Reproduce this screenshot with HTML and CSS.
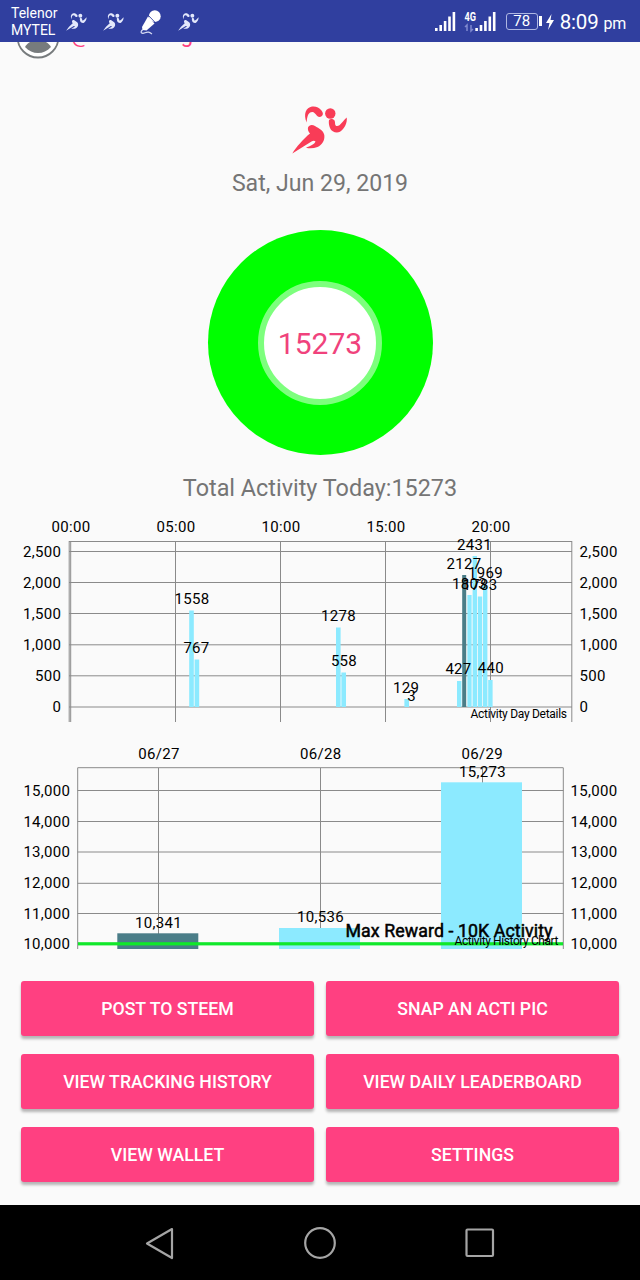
FILE: index.html
```
<!DOCTYPE html>
<html lang="en">
<head>
    <meta charset="UTF-8">
    <meta name="viewport" content="width=device-width, initial-scale=1.0">
    <title>Activity</title>
    <link rel="stylesheet" href="styles.css">
</head>
<body>
    <svg class="defs" width="0" height="0">
        <symbol id="runner" viewBox="0 0 56 48">
            <path d="M14.700 16.500C11 8 14 1.500 20 0.500C24 0 27 1.500 29.500 4.500C32 7.500 31 10.800 27.500 10.900C24.500 10.800 23.500 6.500 20.500 6C16.500 5.800 15 10 14.700 16.500Z"/>
            <circle cx="38.300" cy="7.500" r="5.200"/>
            <path d="M37 14C38.500 12.500 41.500 13 42.500 14.500C43.500 16.500 42.500 19 44.300 20C48 21 51 14.500 54.700 11.500C55.500 16.500 52.500 23 48 25.800C44.500 27.500 39.500 26 38 22C37 19.500 36.500 16.500 37 14Z"/>
            <path d="M16 21.500C17 18.500 20.500 18.200 23 20C27 22.500 31.500 24.500 32.300 29C33 34.500 30 39 25.500 41C21.500 42.500 17.500 42.500 14 41.700C18 40 22.500 38.500 23.500 35.500C22.500 34.500 21 34.500 19.500 35.500L0.300 47.500C4 41.500 11.500 32.500 18 27.500C16.200 25.500 15.600 23.500 16 21.500Z"/>
        </symbol>
    </svg>

    <div class="status-bar">
        <div class="carrier">Telenor<br>MYTEL</div>
        <div class="notifications">
            <svg class="runner-small" width="21" height="18"><use href="#runner"/></svg>
            <svg class="runner-small" width="21" height="18"><use href="#runner"/></svg>
            <svg class="mic" width="23" height="26" viewBox="0 0 23 26">
                <circle cx="14.800" cy="7.200" r="5.900" fill="#fff"/>
                <path d="M8 7.500L14.500 14.500L6.500 21.500L2.500 21L2 18Z" fill="#fff"/>
                <path d="M8.500 6.500L15.500 13.800" stroke="#303f9f" stroke-width="0.900"/>
                <path d="M3 20.500C-1 23.500 2 25 5 23.800S9 23 12 25" fill="none" stroke="#d7dcf4" stroke-width="1.200"/>
            </svg>
            <svg class="runner-small" width="21" height="18"><use href="#runner"/></svg>
        </div>
        <div class="system">
            <svg width="62" height="24" viewBox="0 0 62 24" fill="#fff">
                <rect x="0" y="18" width="2.6" height="3"/>
                <rect x="4.4" y="15" width="2.6" height="6"/>
                <rect x="8.8" y="11" width="2.6" height="10"/>
                <rect x="13.2" y="6.500" width="2.600" height="14.500"/>
                <rect x="17.6" y="2" width="2.6" height="19"/>
                <text x="29.500" y="11" class="network" textLength="11.500" lengthAdjust="spacingAndGlyphs">4G</text>
                <path d="M32 21V15L30 17M36 15V21L38 19" fill="none" stroke="#7f89cf" stroke-width="1.5"/>
                <rect x="40.3" y="18" width="2.6" height="3"/>
                <rect x="44.7" y="15" width="2.6" height="6"/>
                <rect x="49.1" y="11" width="2.6" height="10"/>
                <rect x="53.5" y="6.500" width="2.600" height="14.500"/>
                <rect x="57.900" y="2" width="2.6" height="19"/>
            </svg>
            <div class="battery">78</div>
            <svg class="bolt" width="8" height="16" viewBox="0 0 8 16"><path d="M5.500 0L0 9H3.500L2 16L8 6H4.500Z" fill="#fff"/></svg>
            <div class="clock">8:09 <span>pm</span></div>
        </div>
    </div>

    <!-- scrolled under the status bar -->
    <div class="profile">
        <svg width="44" height="44" viewBox="0 0 44 44">
            <circle cx="22" cy="22" r="20.500" fill="#fff" stroke="#777b7d" stroke-width="1.8"/>
            <path d="M9 32C12 27 17 25 22 25S32 27 35 32C31 36 27 38 22 38S13 36 9 32Z" fill="#777b7d"/>
        </svg>
        <div class="username"><span>@</span><span>g</span></div>
    </div>

    <div class="summary">
        <svg class="logo" width="56" height="48"><use href="#runner"/></svg>
        <div class="date">Sat, Jun 29, 2019</div>
        <div class="ring"><div class="ring-center">15273</div></div>
        <div class="total">Total Activity Today:15273</div>
    </div>

    <svg class="chart" width="640" height="216" viewBox="0 512 640 216">
        <g class="grid">
            <path d="M69 541.500H572M69 551.500H572M69 582.500H572M69 613.500H572M69 644.800H572M69 675.800H572M69 707H572"/>
            <path d="M69.200 541V722M70.700 541V722M175.500 541V722M280.500 541V722M385.500 541V722M490.500 541V722M571.800 541V722"/>
        </g>
        <g class="bars">
            <rect x="189.200" y="610.500" width="4.600" height="96.500"/>
            <rect x="194.600" y="659.500" width="4.600" height="47.500"/>
            <rect x="336" y="627.500" width="4.600" height="79.500"/>
            <rect x="341.400" y="672.500" width="4.600" height="34.500"/>
            <rect x="404.400" y="699" width="4.600" height="8"/>
            <rect x="457" y="681" width="4.400" height="26"/>
            <rect class="selected" x="462.200" y="575" width="4" height="132"/>
            <rect x="467.400" y="595" width="4.200" height="112"/>
            <rect x="472.600" y="556" width="4.400" height="151"/>
            <rect x="477.800" y="596.500" width="4.400" height="110.500"/>
            <rect x="483" y="585" width="4.400" height="122"/>
            <rect x="488.200" y="680" width="4.400" height="27"/>
        </g>
        <g class="labels middle">
            <text x="71" y="532">00:00</text>
            <text x="176" y="532">05:00</text>
            <text x="281" y="532">10:00</text>
            <text x="386" y="532">15:00</text>
            <text x="491" y="532">20:00</text>
            <text x="192" y="604">1558</text>
            <text x="196.500" y="653">767</text>
            <text x="338.500" y="621">1278</text>
            <text x="344" y="666">558</text>
            <text x="406.200" y="693">129</text>
            <text x="411.500" y="700.500">3</text>
            <text x="458.500" y="674">427</text>
            <text x="464" y="568.500">2127</text>
            <text x="469.500" y="588.500">1803</text>
            <text x="474.500" y="549.500">2431</text>
            <text x="480" y="589.500">1783</text>
            <text x="485.500" y="578">1969</text>
            <text x="490.800" y="673">440</text>
        </g>
        <g class="labels end">
            <text x="61.300" y="557">2,500</text>
            <text x="61.300" y="588">2,000</text>
            <text x="61.300" y="619">1,500</text>
            <text x="61.300" y="650">1,000</text>
            <text x="61.300" y="681">500</text>
            <text x="61.300" y="712">0</text>
        </g>
        <g class="labels">
            <text x="579.500" y="557">2,500</text>
            <text x="579.500" y="588">2,000</text>
            <text x="579.500" y="619">1,500</text>
            <text x="579.500" y="650">1,000</text>
            <text x="579.500" y="681">500</text>
            <text x="579.500" y="712">0</text>
        </g>
        <text class="description" x="470.500" y="718" textLength="96.500">Activity Day Details</text>
    </svg>

    <svg class="chart history" width="640" height="220" viewBox="0 740 640 220">
        <g class="grid">
            <path d="M77.500 767.700H563.500M77.500 790.500H563.500M77.500 821.500H563.500M77.500 852H563.500M77.500 883.300H563.500M77.500 913.500H563.500"/>
            <path d="M77.700 768V949M158.500 768V949M320.500 768V949M482.500 768V949M563.300 768V949"/>
        </g>
        <g class="bars">
            <rect class="selected" x="117.300" y="933.300" width="81" height="15.700"/>
            <rect x="279" y="928" width="81" height="21"/>
            <rect x="441" y="782.300" width="81" height="166.700"/>
        </g>
        <rect class="limit" x="78" y="942.200" width="485" height="3.200"/>
        <g class="labels middle">
            <text x="159" y="759">06/27</text>
            <text x="320.700" y="759">06/28</text>
            <text x="482.300" y="759">06/29</text>
            <text x="158.500" y="927.500">10,341</text>
            <text x="320.500" y="921.500">10,536</text>
            <text x="482.500" y="776.500">15,273</text>
        </g>
        <g class="labels end">
            <text x="70.300" y="796">15,000</text>
            <text x="70.300" y="827">14,000</text>
            <text x="70.300" y="857">13,000</text>
            <text x="70.300" y="888">12,000</text>
            <text x="70.300" y="918.500">11,000</text>
            <text x="70.300" y="949">10,000</text>
        </g>
        <g class="labels">
            <text x="570.500" y="796">15,000</text>
            <text x="570.500" y="827">14,000</text>
            <text x="570.500" y="857">13,000</text>
            <text x="570.500" y="888">12,000</text>
            <text x="570.500" y="918.500">11,000</text>
            <text x="570.500" y="949">10,000</text>
        </g>
        <text class="limit-label" x="345.500" y="937" textLength="207">Max Reward - 10K Activity</text>
        <text class="description" x="454.500" y="945" textLength="104">Activity History Chart</text>
    </svg>

    <div class="buttons">
        <button>POST TO STEEM</button>
        <button>SNAP AN ACTI PIC</button>
        <button>VIEW TRACKING HISTORY</button>
        <button>VIEW DAILY LEADERBOARD</button>
        <button>VIEW WALLET</button>
        <button>SETTINGS</button>
    </div>

    <div class="nav-bar">
        <svg width="32" height="34" viewBox="0 0 32 34"><path d="M28 3L3 17.500L28 32Z"/></svg>
        <svg width="34" height="34" viewBox="0 0 34 34"><circle cx="17" cy="17" r="14.800"/></svg>
        <svg width="32" height="34" viewBox="0 0 32 34"><rect x="2.500" y="3.500" width="26.500" height="26.500" rx="1"/></svg>
    </div>
</body>
</html>
```
FILE: styles.css
```
body {
    margin: 0;
    width: 640px;
    height: 1280px;
    overflow: hidden;
    display: flex;
    flex-direction: column;
    background-color: #fafafa;
    font-family: Roboto, sans-serif;
}

svg {
    display: block;
    flex-shrink: 0;
}

.defs {
    position: absolute;
}

.status-bar {
    position: relative;
    z-index: 1;
    height: 42px;
    flex-shrink: 0;
    box-sizing: border-box;
    padding: 1px 14px 0 11px;
    display: flex;
    align-items: center;
    background-color: #303f9f;
    color: #fff;
}

.carrier {
    width: 55px;
    font-size: 14px;
    line-height: 17px;
    white-space: nowrap;
}

.notifications {
    display: flex;
    align-items: center;
    gap: 16px;
}

.runner-small {
    fill: #e3e8fb;
}

.mic {
    margin: 0 -1px 0 0;
}

.system {
    margin-left: auto;
    display: flex;
    align-items: center;
}

.network {
    font-size: 12px;
    font-weight: bold;
}

.battery {
    position: relative;
    width: 32px;
    height: 17px;
    margin-left: 9px;
    box-sizing: border-box;
    border: 1.5px solid #aeb6e2;
    border-radius: 3px;
    font-size: 15px;
    line-height: 15px;
    text-align: center;
}

.battery::after {
    content: "";
    position: absolute;
    top: 2px;
    right: -5px;
    width: 3px;
    height: 10px;
    background-color: #fff;
}

.bolt {
    margin-left: 8px;
}

.clock {
    margin-left: 6px;
    font-size: 20.5px;
    letter-spacing: -0.2px;
    white-space: nowrap;
}

.clock span {
    font-size: 16px;
}

/* profile row */
.profile {
    height: 44px;
    flex-shrink: 0;
    margin-top: -27px;
    padding-left: 16px;
    display: flex;
}

.username {
    width: 122px;
    margin-left: 11px;
    display: flex;
    justify-content: space-between;
    color: #ff4081;
    font-size: 22px;
    line-height: 39px;
}

.summary {
    display: flex;
    flex-direction: column;
    align-items: center;
    color: #757575;
}

.logo {
    margin-top: 47px;
    fill: #f93c57;
}

.date {
    margin-top: 16px;
    font-size: 23.1px;
    line-height: 28px;
}

.ring {
    width: 225px;
    height: 225px;
    margin-top: 32px;
    border-radius: 50%;
    background-color: #00ff00;
    display: flex;
    align-items: center;
    justify-content: center;
}

.ring-center {
    width: 112px;
    height: 112px;
    border: 6px solid #7dff7d;
    border-radius: 50%;
    background-color: #fff;
    color: #f0427c;
    font-size: 30px;
    line-height: 113px;
    text-align: center;
}

.total {
    margin-top: 19px;
    font-size: 23.4px;
    line-height: 28px;
}

/* charts */
.chart {
    margin-top: 10px;
    font-size: 15px;
}

.history {
    margin-top: 12px;
}

.grid path {
    fill: none;
    stroke: #8a8a8a;
    stroke-width: 1;
}

.bars rect {
    fill: #8ceaff;
}

.bars .selected {
    fill: #4a7d88;
}

.labels {
    fill: #000;
    letter-spacing: 0.3px;
}

.middle {
    text-anchor: middle;
}

.end {
    text-anchor: end;
}

.description {
    font-size: 12px;
}

.limit {
    fill: #10e82a;
}

.limit-label {
    font-size: 17.8px;
    stroke: #000;
    stroke-width: 0.5px;
}

/* actions */
.buttons {
    display: grid;
    grid-template-columns: 1fr 1fr;
    gap: 18px 12px;
    padding: 20.5px 21px 0;
}

.buttons button {
    height: 55px;
    padding-top: 3px;
    border: none;
    border-radius: 3px;
    background-color: #ff4081;
    box-shadow: 0 3px 3px rgba(0, 0, 0, 0.28);
    color: #fff;
    font-family: inherit;
    font-size: 17.7px;
    font-weight: 500;
}

.nav-bar {
    height: 75px;
    flex-shrink: 0;
    margin-top: auto;
    display: flex;
    align-items: center;
    justify-content: center;
    gap: 127px;
    background-color: #000;
}

.nav-bar svg {
    fill: none;
    stroke: #a5a5a5;
    stroke-width: 2.2;
    stroke-linejoin: round;
}
```
